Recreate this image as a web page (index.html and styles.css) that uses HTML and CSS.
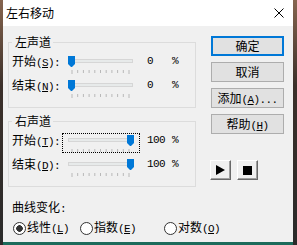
FILE: index.html
```html
<!DOCTYPE html>
<html lang="zh-CN">
<head>
    <meta charset="UTF-8">
    <title>左右移动</title>
    <link rel="stylesheet" href="styles.css">
</head>
<body>
    <div class="win">
        <div class="titlebar">
            <span class="title">左右移动</span>
            <svg class="close" width="10" height="10" viewBox="0 0 10 10">
                <path d="M0.5 0.5 L9.5 9.5 M9.5 0.5 L0.5 9.5" stroke="#000" stroke-width="1"/>
            </svg>
        </div>
        <div class="client">
            <div class="left">
                <fieldset class="grp">
                    <legend>左声道</legend>
                    <div class="row">
                        <span class="lbl">开始<span class="en">(<u>S</u>):</span></span>
                        <span class="slider">
                            <svg width="78" height="20" viewBox="0 0 78 20">
                                <rect x="6.5" y="5.5" width="64" height="3" fill="#e7eaea" stroke="#d6d6d6"/>
                                <path d="M10 16v4M15.7 16v3M21.4 16v3M27.1 16v3M32.8 16v3M38.5 16v3M44.2 16v3M49.9 16v3M55.6 16v3M61.3 16v3M67 16v4" stroke="#b8b8b8" stroke-width="1"/>
                                <polygon points="6,2 13,2 13,10 11,12 10,13 9,13 6,10" fill="#0078d7"/>
                            </svg>
                        </span>
                        <span class="val en">0</span>
                        <span class="pct en">%</span>
                    </div>
                    <div class="row">
                        <span class="lbl">结束<span class="en">(<u>N</u>):</span></span>
                        <span class="slider">
                            <svg width="78" height="20" viewBox="0 0 78 20">
                                <rect x="6.5" y="5.5" width="64" height="3" fill="#e7eaea" stroke="#d6d6d6"/>
                                <path d="M10 16v4M15.7 16v3M21.4 16v3M27.1 16v3M32.8 16v3M38.5 16v3M44.2 16v3M49.9 16v3M55.6 16v3M61.3 16v3M67 16v4" stroke="#b8b8b8" stroke-width="1"/>
                                <polygon points="6,2 13,2 13,10 11,12 10,13 9,13 6,10" fill="#0078d7"/>
                            </svg>
                        </span>
                        <span class="val en">0</span>
                        <span class="pct en">%</span>
                    </div>
                </fieldset>
                <fieldset class="grp">
                    <legend>右声道</legend>
                    <div class="row">
                        <span class="lbl">开始<span class="en">(<u>T</u>):</span></span>
                        <span class="slider focus">
                            <svg width="78" height="20" viewBox="0 0 78 20">
                                <rect x="6.5" y="5.5" width="64" height="3" fill="#e7eaea" stroke="#d6d6d6"/>
                                <path d="M10 16v4M15.7 16v3M21.4 16v3M27.1 16v3M32.8 16v3M38.5 16v3M44.2 16v3M49.9 16v3M55.6 16v3M61.3 16v3M67 16v4" stroke="#b8b8b8" stroke-width="1"/>
                                <polygon points="65,2 72,2 72,10 70,12 69,13 68,13 65,10" fill="#0078d7"/>
                            </svg>
                        </span>
                        <span class="val en">100</span>
                        <span class="pct en">%</span>
                    </div>
                    <div class="row">
                        <span class="lbl">结束<span class="en">(<u>D</u>):</span></span>
                        <span class="slider">
                            <svg width="78" height="20" viewBox="0 0 78 20">
                                <rect x="6.5" y="5.5" width="64" height="3" fill="#e7eaea" stroke="#d6d6d6"/>
                                <path d="M10 16v4M15.7 16v3M21.4 16v3M27.1 16v3M32.8 16v3M38.5 16v3M44.2 16v3M49.9 16v3M55.6 16v3M61.3 16v3M67 16v4" stroke="#b8b8b8" stroke-width="1"/>
                                <polygon points="65,2 72,2 72,10 70,12 69,13 68,13 65,10" fill="#0078d7"/>
                            </svg>
                        </span>
                        <span class="val en">100</span>
                        <span class="pct en">%</span>
                    </div>
                </fieldset>
                <div class="curve">
                    <div class="curve-title">曲线变化<span class="en">:</span></div>
                    <div class="radios">
                        <label class="radio r1"><span class="dot on"></span><span>线性<span class="en">(<u>L</u>)</span></span></label>
                        <label class="radio r2"><span class="dot"></span><span>指数<span class="en">(<u>E</u>)</span></span></label>
                        <label class="radio"><span class="dot"></span><span>对数<span class="en">(<u>O</u>)</span></span></label>
                    </div>
                </div>
            </div>
            <div class="right">
                <button class="btn def">确定</button>
                <button class="btn">取消</button>
                <button class="btn">添加<span class="en">(<u>A</u>)...</span></button>
                <button class="btn help">帮助<span class="en">(<u>H</u>)</span></button>
                <div class="media">
                    <button class="mbtn">
                        <svg width="9" height="10" viewBox="0 0 9 10"><polygon points="0,0 9,5 0,10" fill="#000"/></svg>
                    </button>
                    <button class="mbtn"><span class="stop"></span></button>
                </div>
            </div>
        </div>
    </div>
    <div class="strip"></div>
</body>
</html>
```

FILE: styles.css
```css
* {
    box-sizing: border-box;
}
body {
    margin: 0;
    width: 297px;
    height: 245px;
    overflow: hidden;
    background: linear-gradient(#86654f, #3b2f29 35%, #2a2a2a);
    font-family: "Noto Sans CJK SC", sans-serif;
    font-size: 12px;
    color: #000;
}
.win {
    margin-left: 3px;
    width: 290px;
    height: 242px;
    background: #f0f0f0;
}
.titlebar {
    height: 26px;
    background: #fff;
    display: flex;
    align-items: center;
    justify-content: space-between;
    padding: 0 9px 0 3px;
}
.title {
    line-height: 14px;
}
.client {
    display: flex;
    padding: 9px 0 0 5px;
}
.left {
    width: 188px;
}
.en {
    font-family: "Liberation Mono", monospace;
    font-size: 11px;
    letter-spacing: -0.6px;
}
u {
    text-underline-offset: 1px;
}
.grp {
    margin: 0;
    padding: 5px 0 5px 3px;
    border: 1px solid #dcdcdc;
    min-width: 0;
}
.grp + .grp {
    margin-top: 6px;
}
.grp legend {
    padding: 0 2px 0 3px;
    line-height: 14px;
}
.row {
    display: flex;
    height: 24px;
    line-height: 14px;
    white-space: nowrap;
}
.lbl {
    width: 50px;
}
.slider {
    width: 78px;
    height: 20px;
}
.slider svg {
    display: block;
}
.slider.focus {
    outline: 1px dotted #000;
    outline-offset: -1px;
}
.val {
    width: 32px;
    padding-left: 7px;
}
.curve {
    padding-left: 4px;
    margin-top: 13px;
    line-height: 14px;
}
.radios {
    display: flex;
    margin-top: 4px;
    padding-left: 1px;
    white-space: nowrap;
}
.radio {
    display: flex;
    align-items: center;
    gap: 1px;
    flex: none;
}
.r1 {
    width: 67px;
}
.r2 {
    width: 84px;
}
.dot {
    width: 13px;
    height: 13px;
    border: 1px solid #333;
    border-radius: 50%;
    background: #fff;
}
.dot.on {
    background: radial-gradient(circle, #333 0 3px, #fff 3.6px);
}
.right {
    margin-left: 15px;
    padding-top: 1px;
}
.btn {
    display: block;
    width: 73px;
    height: 20px;
    margin: 0 0 6px 0;
    padding: 0;
    border: 1px solid #adadad;
    background: #e1e1e1;
    font: inherit;
    line-height: 18px;
    color: #000;
}
.btn.def {
    border: 2px solid #0078d7;
    line-height: 16px;
}
.btn.help {
    margin-top: 3px;
}
.media {
    display: flex;
    gap: 6px;
    margin: 26px 0 0 -1px;
}
.mbtn {
    width: 21px;
    height: 20px;
    padding: 0;
    display: flex;
    align-items: center;
    justify-content: center;
    background: #f0f0f0;
    border: 1px solid;
    border-color: #fff #696969 #696969 #fff;
    box-shadow: inset -1px -1px #a0a0a0;
}
.stop {
    display: block;
    width: 9px;
    height: 9px;
    background: #000;
}
.strip {
    margin-left: 3px;
    width: 290px;
    height: 3px;
    background: #1c6b5b;
}
```
